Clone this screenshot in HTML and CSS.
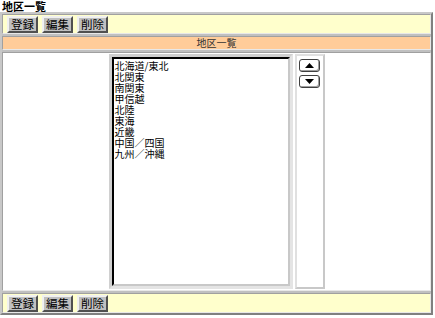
FILE: index.html
```html
<!DOCTYPE html>
<html lang="ja">
<head>
<meta charset="utf-8">
<title>地区一覧</title>
<link rel="stylesheet" href="styles.css">
</head>
<body>
<div class="title">地区一覧</div>
<div class="frame">
  <div class="cell toolbar">
    <button class="btn">登録</button>
    <button class="btn">編集</button>
    <button class="btn">削除</button>
  </div>
  <div class="cell header">地区一覧</div>
  <div class="cell body">
    <div class="listwrap">
      <div class="list">
        <div class="item">北海道/東北</div>
        <div class="item">北関東</div>
        <div class="item">南関東</div>
        <div class="item">甲信越</div>
        <div class="item">北陸</div>
        <div class="item">東海</div>
        <div class="item">近畿</div>
        <div class="item">中国／四国</div>
        <div class="item">九州／沖縄</div>
      </div>
    </div>
    <div class="side">
      <button class="arrow"><svg width="9" height="5" viewBox="0 0 9 5"><polygon points="4.5,0 9,5 0,5" fill="#000"/></svg></button>
      <button class="arrow"><svg width="9" height="5" viewBox="0 0 9 5"><polygon points="0,0 9,0 4.5,5" fill="#000"/></svg></button>
    </div>
  </div>
  <div class="cell toolbar">
    <button class="btn">登録</button>
    <button class="btn">編集</button>
    <button class="btn">削除</button>
  </div>
</div>
</body>
</html>
```
FILE: styles.css
```css
html, body {
  margin: 0;
  padding: 0;
  background: #fff;
}
body {
  font-family: "Noto Sans CJK JP", "Noto Sans", sans-serif;
  width: 435px;
  height: 318px;
  overflow: hidden;
}
.title {
  font-size: 11px;
  font-weight: bold;
  line-height: 12px;
  height: 12px;
  padding-left: 2px;
  color: #000;
}
.frame {
  box-sizing: border-box;
  width: 433px;
  border: 2px solid;
  border-color: #c8c8c8 #808080 #808080 #c8c8c8;
  background: #c0c0c0;
  display: grid;
  grid-template-rows: 20px 14px 239px 20px;
  row-gap: 2px;
}
.cell {
  box-sizing: border-box;
  border: 1px solid;
  border-color: #a0a0a0 #e8e8e8 #e8e8e8 #a0a0a0;
}
.toolbar {
  background: #ffffcc;
  display: flex;
  align-items: center;
  gap: 4px;
  padding-left: 4px;
}
.btn {
  box-sizing: border-box;
  width: 31px;
  height: 17px;
  padding: 0;
  margin: 0;
  font-family: "Noto Sans CJK JP", sans-serif;
  font-size: 11.5px;
  line-height: 13px;
  color: #000;
  background: #c0c0c0;
  border: 2px solid;
  border-color: #f0f0f0 #505050 #505050 #f0f0f0;
}
.header {
  background: #ffcc99;
  text-align: center;
  font-size: 10px;
  line-height: 12px;
  color: #333;
}
.body {
  background: #fff;
  display: flex;
  justify-content: center;
  align-items: center;
  gap: 2px;
}
.listwrap {
  box-sizing: border-box;
  width: 184px;
  height: 235px;
  border: 3px solid;
  border-color: #d0d0d0 #e4e4e4 #e4e4e4 #d0d0d0;
  background: #f0f0f0;
}
.list {
  box-sizing: border-box;
  height: 100%;
  background: #fff;
  border: 2px solid;
  border-color: #000 #c8c8c8 #c8c8c8 #000;
  padding: 1px 0 0 1px;
}
.item {
  font-size: 10px;
  line-height: 11px;
  height: 11px;
  color: #000;
  white-space: nowrap;
}
.side {
  box-sizing: border-box;
  width: 30px;
  height: 235px;
  border: 2px solid;
  border-color: #e0e0e0 #c8c8c8 #c8c8c8 #e0e0e0;
  background: #fff;
  display: flex;
  flex-direction: column;
  align-items: center;
  gap: 3px;
  padding-top: 3px;
}
.arrow {
  box-sizing: border-box;
  width: 21px;
  height: 13px;
  padding: 0;
  margin: 0;
  background: #fff;
  border: 1px solid #404040;
  border-radius: 3px;
  box-shadow: inset -1px -1px 0 #a0a0a0, inset 1px 1px 0 #fff;
  display: flex;
  align-items: center;
  justify-content: center;
}
.arrow svg {
  display: block;
}
```
